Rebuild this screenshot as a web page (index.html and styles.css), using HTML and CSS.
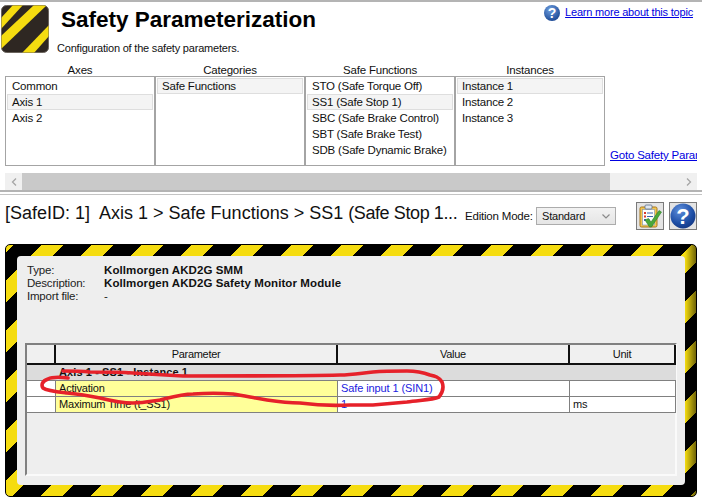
FILE: index.html
```html
<!DOCTYPE html>
<html lang="en">
<head>
    <meta charset="UTF-8">
    <title>Safety Parameterization</title>
    <link rel="stylesheet" href="styles.css">
</head>
<body>
<div class="page">
    <div class="head">
        <svg class="logo" width="48" height="48" viewBox="0 0 48 48">
            <defs><clipPath id="logoclip"><rect x="0.5" y="0.5" width="47" height="47" rx="5"/></clipPath></defs>
            <rect x="0.5" y="0.5" width="47" height="47" rx="5" fill="#2e2722" stroke="#6b655e"/>
            <g clip-path="url(#logoclip)" fill="#f5dc10">
                <polygon points="12,0 22,0 0,24 0,13"/>
                <polygon points="33,0 46,0 0,44 0,31"/>
                <polygon points="48,20 48,31 33,48 21,48"/>
            </g>
        </svg>
        <div class="head-text">
            <h1>Safety Parameterization</h1>
            <p>Configuration of the safety parameters.</p>
        </div>
        <div class="learn">
            <svg width="16" height="16" viewBox="0 0 16 16">
                <defs><radialGradient id="ball1" cx="0.4" cy="0.3" r="0.8"><stop offset="0" stop-color="#6f9fe0"/><stop offset="1" stop-color="#123f8c"/></radialGradient></defs>
                <circle cx="8" cy="8" r="8" fill="url(#ball1)"/>
                <text x="8" y="13" text-anchor="middle" class="qmark-small">?</text>
            </svg>
            <a href="#">Learn more about this topic</a>
        </div>
    </div>

    <div class="pickers">
        <div class="picker">
            <div class="picker-title">Axes</div>
            <ul class="list">
                <li>Common</li>
                <li class="sel">Axis 1</li>
                <li>Axis 2</li>
            </ul>
        </div>
        <div class="picker">
            <div class="picker-title">Categories</div>
            <ul class="list">
                <li class="sel">Safe Functions</li>
            </ul>
        </div>
        <div class="picker">
            <div class="picker-title">Safe Functions</div>
            <ul class="list">
                <li>STO (Safe Torque Off)</li>
                <li class="sel">SS1 (Safe Stop 1)</li>
                <li>SBC (Safe Brake Control)</li>
                <li>SBT (Safe Brake Test)</li>
                <li>SDB (Safe Dynamic Brake)</li>
            </ul>
        </div>
        <div class="picker">
            <div class="picker-title">Instances</div>
            <ul class="list">
                <li class="sel">Instance 1</li>
                <li>Instance 2</li>
                <li>Instance 3</li>
            </ul>
        </div>
        <a class="goto" href="#">Goto Safety Parameters</a>
    </div>

    <div class="scrollbar">
        <div class="arrow">
            <svg width="6" height="8" viewBox="0 0 6 8"><path d="M5 0.5 L1.5 4 L5 7.5" fill="none" stroke="#a6a6a6" stroke-width="1.3"/></svg>
        </div>
        <div class="thumb"></div>
        <div class="arrow arrow-end">
            <svg width="6" height="8" viewBox="0 0 6 8"><path d="M1 0.5 L4.5 4 L1 7.5" fill="none" stroke="#a6a6a6" stroke-width="1.3"/></svg>
        </div>
    </div>
    <div class="rule"></div>

    <div class="crumbs">
        <div class="path">[SafeID: 1]&nbsp; Axis 1 &gt; Safe Functions &gt; SS1 <span class="tail">(Safe Stop 1...</span></div>
        <span class="mode-label">Edition Mode:</span>
        <div class="select">
            <span>Standard</span>
            <svg width="8" height="5" viewBox="0 0 8 5"><path d="M0.5 0.5 L4 4 L7.5 0.5" fill="none" stroke="#8a8a8a" stroke-width="1.2"/></svg>
        </div>
        <button class="tool tool-first">
            <svg width="24" height="24" viewBox="0 0 24 24">
                <rect x="2" y="3" width="17" height="20" rx="1.5" fill="#f2c650" stroke="#a8761c"/>
                <rect x="4.5" y="5.5" width="12" height="15.5" fill="#fdfdfd" stroke="#7b93b5" stroke-width="0.6"/>
                <rect x="7" y="1" width="7" height="4" rx="1" fill="#dfe6ef" stroke="#5c6f8c" stroke-width="0.8"/>
                <rect x="6" y="8" width="2" height="2" fill="#d8382c"/>
                <rect x="9" y="8.5" width="6" height="1" fill="#3a62b0"/>
                <rect x="6" y="11.5" width="2" height="2" fill="#d8382c"/>
                <rect x="9" y="12" width="6" height="1" fill="#3a62b0"/>
                <rect x="6" y="15" width="2" height="2" fill="#3a62b0"/>
                <rect x="9" y="15.5" width="3" height="1" fill="#3a62b0"/>
                <path d="M7 16 L10.5 14.5 L13 18 L21 6.5 L23.5 8 L13.5 23 L11.5 23 Z" fill="#49a83a" stroke="#2f7d28" stroke-width="0.6"/>
            </svg>
        </button>
        <button class="tool">
            <svg width="26" height="26" viewBox="0 0 26 26">
                <defs><radialGradient id="ball2" cx="0.38" cy="0.28" r="0.85"><stop offset="0" stop-color="#5f8fdc"/><stop offset="0.6" stop-color="#1e4fa6"/><stop offset="1" stop-color="#0f2f78"/></radialGradient></defs>
                <circle cx="13" cy="13" r="12.5" fill="url(#ball2)"/>
                <text x="13" y="21" text-anchor="middle" class="qmark">?</text>
            </svg>
        </button>
    </div>

    <div class="hazard">
        <div class="card">
            <div class="meta">
                <span>Type:</span><b>Kollmorgen AKD2G SMM</b>
                <span>Description:</span><b>Kollmorgen AKD2G Safety Monitor Module</b>
                <span>Import file:</span><span>-</span>
            </div>
            <div class="grid-box">
                <table class="grid">
                    <colgroup>
                        <col class="c0"><col class="c1"><col class="c2"><col class="c3">
                    </colgroup>
                    <tr class="hdr">
                        <th></th><th>Parameter</th><th>Value</th><th>Unit</th>
                    </tr>
                    <tr class="grp">
                        <td></td><td colspan="3">Axis 1 - SS1 - Instance 1</td>
                    </tr>
                    <tr>
                        <td></td><td class="yellow">Activation</td><td class="val">Safe input 1 (SIN1)</td><td></td>
                    </tr>
                    <tr>
                        <td></td><td class="yellow">Maximum Time (t_SS1)</td><td class="val">1</td><td>ms</td>
                    </tr>
                </table>
            </div>
        </div>
    </div>

    <svg class="scribble" width="702" height="503" viewBox="0 0 702 503">
        <path d="M68 378 C60 377 52 377 48 379 C42 381 41 385 43 388 C47 391 58 392 67 393 C80 394 90 396 100 398 C112 401 122 403 133 403 C145 403 152 401 160 400 C172 397 182 394 193 394 C207 393 220 393 233 394 C245 396 255 398 267 400 C280 402 290 403 300 403 C315 405 332 406 350 405 C360 405 366 405 373 405 C385 404 396 403 407 402 C420 400 432 400 439 397 C443 392 444 387 442 382 C439 377 435 376 430 375 C422 372 415 371 407 371 C395 371 384 371 373 372 C362 373 352 375 340 375 C300 376 240 376 183 376 C165 375 150 374 133 373 C118 372 104 372 90 372 C80 371 72 371 63 371"
              fill="none" stroke="#e6212a" stroke-width="3.6" stroke-linecap="round"/>
    </svg>
</div>
</body>
</html>
```

FILE: styles.css
```css
html, body {
    margin: 0;
    padding: 0;
    background-color: #fff;
}

body {
    font-family: "Liberation Sans", Arial, sans-serif;
    font-size: 11.5px;
    letter-spacing: -0.2px;
    color: #111;
    overflow: hidden;
}

.page {
    position: relative;
    width: 702px;
    height: 503px;
    overflow: hidden;
    border-top: 2px solid #b4b4b4;
    box-sizing: border-box;
}

/* header */
.head {
    display: flex;
    height: 61px;
    padding: 3px 0 0 1px;
    box-sizing: border-box;
}

.logo {
    flex: none;
}

.head-text {
    margin-left: 8px;
}

.head-text h1 {
    margin: 1px 0 0 4px;
    font-size: 22.5px;
    line-height: 27px;
    font-weight: bold;
    letter-spacing: 0;
    color: #000;
}

.head-text p {
    margin: 8px 0 0;
    font-size: 11px;
    line-height: 14px;
}

.learn {
    display: flex;
    align-items: center;
    gap: 5px;
    margin-left: auto;
    margin-right: 9px;
    height: 16px;
}

.learn a {
    font-size: 11px;
    line-height: 14px;
    margin-top: -3px;
}

a {
    color: #0000e0;
    text-decoration: underline;
}

.qmark-small {
    font: bold 14px "Liberation Sans", sans-serif;
    fill: #fff;
}

/* pickers */
.pickers {
    display: flex;
    margin-left: 5px;
}

.picker {
    width: 150px;
}

.picker-title {
    height: 13px;
    line-height: 15px;
    text-align: center;
}

.list {
    list-style: none;
    margin: 0;
    padding: 1px;
    height: 86px;
    border: 1px solid #a4a4a4;
}

.list li {
    height: 16px;
    line-height: 16px;
    padding-left: 5px;
    box-sizing: border-box;
    white-space: nowrap;
}

.list li.sel {
    background-color: #f4f4f4;
    outline: 1px solid #dedede;
    outline-offset: -1px;
}

.goto {
    align-self: flex-end;
    margin: 0 5px 5px 5px;
    white-space: nowrap;
    overflow: hidden;
    width: 87px;
}

/* scrollbar */
.scrollbar {
    display: flex;
    height: 17px;
    margin: 7px 5px 0;
    background-color: #f0f0f0;
}

.arrow {
    width: 17px;
    display: flex;
    align-items: center;
    justify-content: center;
}

.arrow-end {
    margin-left: auto;
}

.thumb {
    width: 588px;
    background-color: #c9c9c9;
}

.rule {
    height: 2px;
    border-top: 2px solid #b4b4b4;
    border-bottom: 1px solid #c4c4c4;
}

/* breadcrumb row */
.crumbs {
    display: flex;
    align-items: center;
    height: 36px;
    padding-left: 5px;
}

.path {
    width: 460px;
    font-size: 18px;
    letter-spacing: 0;
    white-space: nowrap;
    overflow: hidden;
    flex: none;
}

.path .tail {
    letter-spacing: -0.4px;
}

.mode-label {
    width: 71px;
    margin-top: 6px;
    flex: none;
    white-space: nowrap;
}

.select {
    display: flex;
    align-items: center;
    justify-content: space-between;
    width: 80px;
    height: 18px;
    margin-top: 6px;
    padding: 0 5px;
    box-sizing: border-box;
    border: 1px solid #acacac;
    background: linear-gradient(#f2f2f2, #e5e5e5);
    font-size: 11px;
    flex: none;
}

.tool {
    width: 28px;
    height: 28px;
    padding: 0;
    margin: 6px 0 0 5px;
    border: 1px solid #7a7a7a;
    background-color: #e4e4e4;
    display: flex;
    align-items: center;
    justify-content: center;
}

.tool-first {
    margin-left: 20px;
}

.qmark {
    font: bold 22px "Liberation Sans", sans-serif;
    fill: #fff;
}

/* hazard frame */
.hazard {
    margin: 13px 5px 0;
    padding: 11px;
    height: 253px;
    box-sizing: border-box;
    border: 1px solid #000;
    border-radius: 5px;
    background:
        linear-gradient(90deg, rgba(0, 0, 0, 0), rgba(0, 0, 0, 0.55)) right top / 11px 100% no-repeat,
        repeating-linear-gradient(135deg,
            #f5dc10 0, #f5dc10 4.95px,
            #000 4.95px, #000 24.75px,
            #f5dc10 24.75px, #f5dc10 35.36px);
}

.card {
    height: 100%;
    box-sizing: border-box;
    background-color: #eeeeee;
    border-radius: 4px;
    padding: 8px 8px 0 10px;
}

.meta {
    display: grid;
    grid-template-columns: 77px 1fr;
    grid-auto-rows: 13px;
    line-height: 13px;
}

.meta span {
    color: #222;
}

.meta b {
    color: #111;
    letter-spacing: 0.1px;
}

/* parameter grid */
.grid-box {
    margin: 40px 0 0 -2px;
    height: 133px;
    width: 652px;
    box-sizing: border-box;
    border: 2px solid #fafafa;
    border-top-color: #808080;
    border-left-color: #808080;
}

.grid {
    border-collapse: separate;
    border-spacing: 0;
    table-layout: fixed;
    width: 649px;
    font-size: 11px;
}

.c0 { width: 29px; }
.c1 { width: 282px; }
.c2 { width: 232px; }
.c3 { width: 106px; }

.grid th {
    height: 20px;
    padding: 0;
    font-weight: normal;
    letter-spacing: -0.3px;
    background-color: #f0f0f0;
    border-right: 2px solid #111;
    border-bottom: 2px solid #111;
    box-sizing: border-box;
}

.grid td {
    height: 16px;
    padding: 0 3px;
    box-sizing: border-box;
    background-color: #fff;
    border-right: 1px solid #808080;
    border-bottom: 1px solid #808080;
    line-height: 15px;
}

.grid .grp td {
    background-color: #dcdcdc;
    border-right: none;
    font-weight: bold;
    letter-spacing: 0.1px;
}

.grid td.yellow {
    background-color: #ffff99;
}

.grid td.val {
    color: #1a1ae0;
    letter-spacing: -0.1px;
}

/* red marker over the screenshot */
.scribble {
    position: absolute;
    left: 0;
    top: -2px;
    pointer-events: none;
}
```
